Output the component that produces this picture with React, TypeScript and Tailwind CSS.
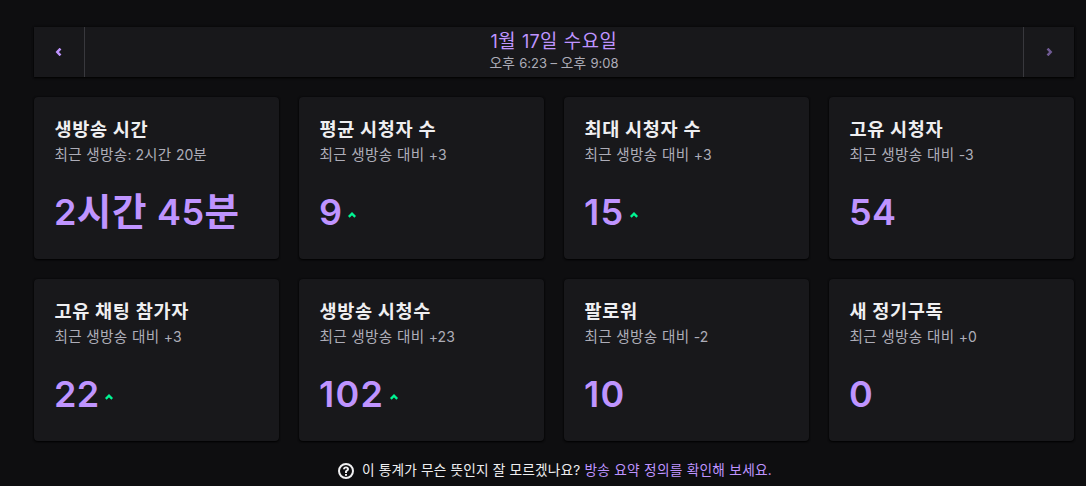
type Stat = { title: string; note: string; value: string; up?: boolean };

const stats: Stat[] = [
  { title: "생방송 시간", note: "최근 생방송: 2시간 20분", value: "2시간 45분" },
  { title: "평균 시청자 수", note: "최근 생방송 대비 +3", value: "9", up: true },
  { title: "최대 시청자 수", note: "최근 생방송 대비 +3", value: "15", up: true },
  { title: "고유 시청자", note: "최근 생방송 대비 -3", value: "54" },
  { title: "고유 채팅 참가자", note: "최근 생방송 대비 +3", value: "22", up: true },
  { title: "생방송 시청수", note: "최근 생방송 대비 +23", value: "102", up: true },
  { title: "팔로워", note: "최근 생방송 대비 -2", value: "10" },
  { title: "새 정기구독", note: "최근 생방송 대비 +0", value: "0" },
];

const panel = "bg-[#18181b] shadow-[0_1px_2px_rgba(0,0,0,0.9),0_0_2px_rgba(0,0,0,0.6)]";

/* Sets the Hangul runs slightly larger than the figures beside them. */
function Mixed({ text, hangul }: { text: string; hangul: string }) {
  return (
    <>
      {text.split(/([가-힣]+(?: [가-힣]+)* ?)/).map((part, i) =>
        i % 2 ? (
          <span key={i} className={`leading-none ${hangul}`}>{part}</span>
        ) : (
          part
        ),
      )}
    </>
  );
}

function Chevron({ className }: { className: string }) {
  return (
    <svg viewBox="0 0 8 8" className={className} fill="none" stroke="currentColor" strokeWidth="2.5">
      <path d="M5.5 0.6 2.3 4l3.2 3.4" />
    </svg>
  );
}

function StatCard({ title, note, value, up }: Stat) {
  return (
    <section className={`flex h-[162px] flex-col rounded-[4px] px-5 pt-5 ${panel}`}>
      <h2 className="h-6 pl-[0.5px] text-[18.6px] leading-6 font-bold tracking-[0.65px] text-[#efeff1]">{title}</h2>
      <p className="mt-1 h-5 pl-[0.5px] text-[14px] leading-5 text-[#adadb8]">
        <Mixed text={note} hangul="text-[14.6px] tracking-[0.3px]" />
      </p>
      <div className="mt-[23px] flex h-12 items-center">
        <span className={`text-[36px] leading-[48px] font-semibold text-[#bf94ff] ${value.startsWith("1") ? "tracking-[1.3px]" : "tracking-[0.4px]"}`}>
          <Mixed text={value} hangul="text-[37.5px] tracking-[0.6px]" />
        </span>
        {up && (
          <svg viewBox="0 0 8 6" className="mt-[5px] ml-[5.5px] h-1.5 w-2" fill="none" stroke="#00f593" strokeWidth="2.4">
            <path d="M0.8 4.9 4 1.7l3.2 3.2" />
          </svg>
        )}
      </div>
    </section>
  );
}

export default function App() {
  return (
    <main className="h-[486px] overflow-hidden bg-[#0e0e10] pt-[27px] pr-3 pl-[34px] font-['Inter','Noto_Sans_CJK_KR',sans-serif] whitespace-nowrap">
      <header className={`flex h-[50px] ${panel}`}>
        <button aria-label="이전" className="flex w-[51px] items-center justify-center border-r border-[#38383d] text-[#bf94ff]">
          <Chevron className="size-2" />
        </button>
        <div className="flex flex-1 flex-col items-center">
          <h1 className="mt-px h-[27px] text-[18px] leading-[28px] tracking-[0.3px] text-[#bf94ff]">
            <Mixed text="1월 17일 수요일" hangul="text-[18.8px] tracking-[0.6px]" />
          </h1>
          <p className="h-4 text-[13px] leading-4 text-[#adadb8]">
            <Mixed text="오후 6:23 – 오후 9:08" hangul="text-[13.7px] tracking-[0.2px]" />
          </p>
        </div>
        <button aria-label="다음" className="flex w-[51px] items-center justify-center border-l border-[#38383d] text-[#705b94]">
          <Chevron className="size-2 rotate-180" />
        </button>
      </header>
      <div className="mt-5 grid grid-cols-4 gap-5">
        {stats.map((stat) => (
          <StatCard key={stat.title} {...stat} />
        ))}
      </div>
      <footer className="mt-[19px] flex h-5 items-center justify-center text-[13.7px] leading-5 text-[#efeff1]">
        <svg viewBox="0 0 20 20" className="mt-px mr-1.5 size-5" fill="currentColor">
          <path fillRule="evenodd" d="M10 2a8 8 0 1 0 0 16 8 8 0 0 0 0-16Zm0 2a6 6 0 1 1 0 12 6 6 0 0 1 0-12Z" />
          <path d="M9 12v-1.3c0-1 .5-1.4 1.2-1.8.5-.3.8-.5.8-.9 0-.5-.4-.8-1-.8s-1 .4-1 1H7c0-1.7 1.3-2.8 3-2.8s3 1 3 2.6c0 1.3-.8 1.9-1.4 2.3-.4.3-.6.4-.6.7v1H9Zm0 1h2v1.8H9V13Z" />
        </svg>
        <span className="tracking-[0.16px]">이 통계가 무슨 뜻인지 잘 모르겠나요?</span>
        <a href="#" className="ml-1 tracking-[0.25px] text-[#bf94ff]">방송 요약 정의를 확인해 보세요.</a>
      </footer>
    </main>
  );
}
